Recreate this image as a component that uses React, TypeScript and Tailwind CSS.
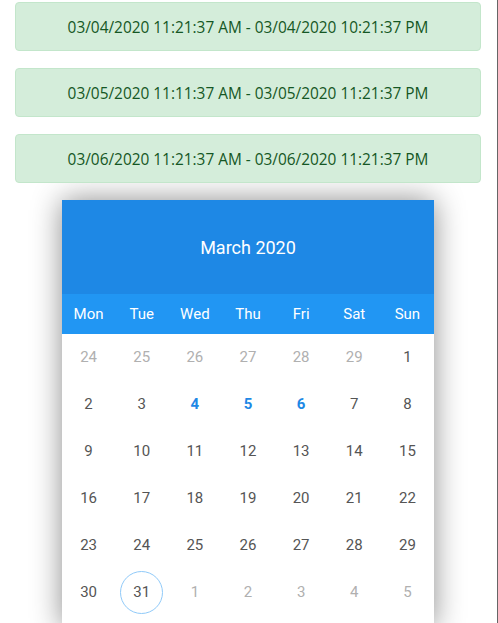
import React from 'react';

const ranges = [
  '03/04/2020 11:21:37 AM - 03/04/2020 10:21:37 PM',
  '03/05/2020 11:11:37 AM - 03/05/2020 11:21:37 PM',
  '03/06/2020 11:21:37 AM - 03/06/2020 11:21:37 PM',
];

const weekdays = ['Mon', 'Tue', 'Wed', 'Thu', 'Fri', 'Sat', 'Sun'];

type Day = { n: number; muted?: boolean; active?: boolean; today?: boolean };

const weeks: Day[][] = [
  [24, 25, 26, 27, 28, 29].map((n) => ({ n, muted: true } as Day)).concat([{ n: 1 }]),
  [{ n: 2 }, { n: 3 }, { n: 4, active: true }, { n: 5, active: true }, { n: 6, active: true }, { n: 7 }, { n: 8 }],
  [9, 10, 11, 12, 13, 14, 15].map((n) => ({ n })),
  [16, 17, 18, 19, 20, 21, 22].map((n) => ({ n })),
  [23, 24, 25, 26, 27, 28, 29].map((n) => ({ n })),
  [{ n: 30 }, { n: 31, today: true }, ...[1, 2, 3, 4, 5].map((n) => ({ n, muted: true }))],
];

export default function App() {
  return (
    <div className="relative h-[623px] w-[498px] overflow-hidden bg-white">
      <div className="flex flex-col gap-[17px] px-[15px] pt-[2px] pr-[17px]">
        {ranges.map((r) => (
          <div
            key={r}
            className="flex h-[49px] items-center justify-center rounded-[4px] border border-[#c3e6cb] bg-[#d4edda] pt-[2px] text-[15.4px] text-[#155724] [font-family:'Open_Sans',sans-serif]"
          >
            {r}
          </div>
        ))}
      </div>

      <div className="ml-[62px] mt-[17px] w-[372px] bg-white pb-[12px] shadow-[0_0_28px_rgba(0,0,0,0.45)] [font-family:Roboto,sans-serif]">
        <div className="flex h-[94px] items-center justify-center bg-[#1e88e5] pt-[1px] text-[18px] text-white">
          March 2020
        </div>
        <div className="grid h-[40px] grid-cols-7 items-center bg-[#2196f3] pt-[1px] text-[15px] text-white">
          {weekdays.map((d) => (
            <div key={d} className="text-center">{d}</div>
          ))}
        </div>
        <div className="flex flex-col">
          {weeks.map((w, i) => (
            <div key={i} className="grid h-[47px] grid-cols-7">
              {w.map((d, j) => (
                <div key={j} className="flex items-center justify-center">
                  <span
                    className={
                      'flex h-[43px] w-[43px] items-center justify-center rounded-full text-[15px] ' +
                      (d.today ? 'border border-[#90caf9] ' : '') +
                      (d.muted
                        ? 'text-[#b0b0b0]'
                        : d.active
                        ? 'font-bold text-[#1e88e5]'
                        : 'text-[#555]')
                    }
                  >
                    {d.n}
                  </span>
                </div>
              ))}
            </div>
          ))}
        </div>
      </div>

      <div className="absolute right-0 top-0 h-full w-[1px] bg-[#666]" />
    </div>
  );
}
